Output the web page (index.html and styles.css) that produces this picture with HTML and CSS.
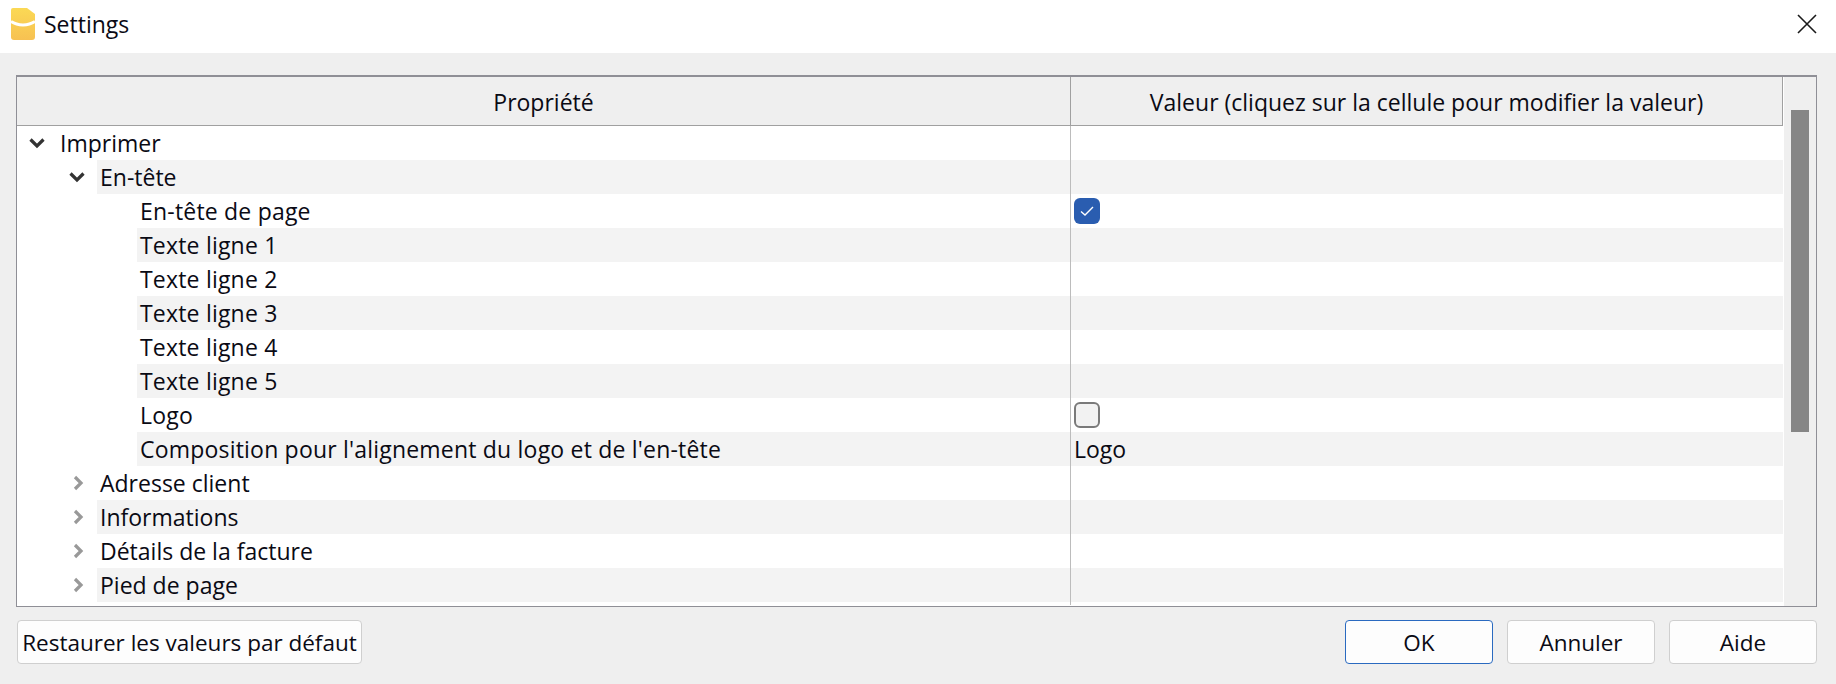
FILE: index.html
```html
<!DOCTYPE html>
<html lang="fr">
<head>
    <meta charset="UTF-8">
    <title>Settings</title>
    <link rel="stylesheet" href="styles.css">
</head>
<body>
    <div class="titlebar">
        <svg class="app-icon" width="26" height="34" viewBox="0 0 26 34">
            <defs>
                <linearGradient id="appGrad" x1="0" y1="0" x2="0" y2="1">
                    <stop offset="0" stop-color="#fbd955"/>
                    <stop offset="1" stop-color="#f7c152"/>
                </linearGradient>
            </defs>
            <path d="M3 1H17L25 7V30a3 3 0 0 1-3 3H4a3 3 0 0 1-3-3V3a2 2 0 0 1 2-2Z" fill="url(#appGrad)"/>
            <path d="M1 14.5C8 19 18 19 25 14.5" fill="none" stroke="#fff" stroke-width="3"/>
        </svg>
        <span class="title">Settings</span>
        <svg class="close" width="20" height="20" viewBox="0 0 20 20">
            <path d="M1 1L19 19M19 1L1 19" fill="none" stroke="#1a1a1a" stroke-width="1.6"/>
        </svg>
    </div>

    <div class="content">
        <div class="frame">
            <div class="grid">
                <div class="head">
                    <div class="head-cell">Propriété</div>
                    <div class="head-cell">Valeur (cliquez sur la cellule pour modifier la valeur)</div>
                </div>

                <div class="row">
                    <div class="name lvl1">
                        <svg class="twisty" viewBox="0 0 16 10"><path d="M1.5 1.5L8 8L14.5 1.5" class="open"/></svg>
                        <span class="label">Imprimer</span>
                    </div>
                    <div class="value"></div>
                </div>
                <div class="row alt">
                    <div class="name lvl2">
                        <svg class="twisty" viewBox="0 0 16 10"><path d="M1.5 1.5L8 8L14.5 1.5" class="open"/></svg>
                        <span class="label">En-tête</span>
                    </div>
                    <div class="value"></div>
                </div>
                <div class="row">
                    <div class="name lvl3"><span class="label">En-tête de page</span></div>
                    <div class="value">
                        <span class="check on">
                            <svg width="14" height="12" viewBox="0 0 14 12"><path d="M1 6.5L5 10L13 2" fill="none" stroke="#fff" stroke-width="1.4"/></svg>
                        </span>
                    </div>
                </div>
                <div class="row alt">
                    <div class="name lvl3"><span class="label">Texte ligne 1</span></div>
                    <div class="value"></div>
                </div>
                <div class="row">
                    <div class="name lvl3"><span class="label">Texte ligne 2</span></div>
                    <div class="value"></div>
                </div>
                <div class="row alt">
                    <div class="name lvl3"><span class="label">Texte ligne 3</span></div>
                    <div class="value"></div>
                </div>
                <div class="row">
                    <div class="name lvl3"><span class="label">Texte ligne 4</span></div>
                    <div class="value"></div>
                </div>
                <div class="row alt">
                    <div class="name lvl3"><span class="label">Texte ligne 5</span></div>
                    <div class="value"></div>
                </div>
                <div class="row">
                    <div class="name lvl3"><span class="label">Logo</span></div>
                    <div class="value"><span class="check"></span></div>
                </div>
                <div class="row alt">
                    <div class="name lvl3"><span class="label">Composition pour l'alignement du logo et de l'en-tête</span></div>
                    <div class="value">Logo</div>
                </div>
                <div class="row">
                    <div class="name lvl2">
                        <svg class="twisty" viewBox="0 0 16 16"><path d="M6 2L12 8L6 14" class="closed"/></svg>
                        <span class="label">Adresse client</span>
                    </div>
                    <div class="value"></div>
                </div>
                <div class="row alt">
                    <div class="name lvl2">
                        <svg class="twisty" viewBox="0 0 16 16"><path d="M6 2L12 8L6 14" class="closed"/></svg>
                        <span class="label">Informations</span>
                    </div>
                    <div class="value"></div>
                </div>
                <div class="row">
                    <div class="name lvl2">
                        <svg class="twisty" viewBox="0 0 16 16"><path d="M6 2L12 8L6 14" class="closed"/></svg>
                        <span class="label">Détails de la facture</span>
                    </div>
                    <div class="value"></div>
                </div>
                <div class="row alt">
                    <div class="name lvl2">
                        <svg class="twisty" viewBox="0 0 16 16"><path d="M6 2L12 8L6 14" class="closed"/></svg>
                        <span class="label">Pied de page</span>
                    </div>
                    <div class="value"></div>
                </div>
                <div class="row filler">
                    <div class="name"></div>
                    <div class="value"></div>
                </div>
            </div>
            <div class="scrollbar"><div class="thumb"></div></div>
        </div>

        <div class="buttons">
            <button class="btn wide">Restaurer les valeurs par défaut</button>
            <div class="right-buttons">
                <button class="btn primary">OK</button>
                <button class="btn">Annuler</button>
                <button class="btn">Aide</button>
            </div>
        </div>
    </div>
</body>
</html>
```

FILE: styles.css
```css
html, body {
    height: 100%;
}
body {
    margin: 0;
    display: flex;
    flex-direction: column;
    font-family: 'Open Sans', 'Noto Sans', sans-serif;
    font-size: 23px;
    color: #0a0a14;
    background-color: #efefef;
}
.titlebar {
    height: 53px;
    box-sizing: border-box;
    background-color: #fff;
    display: flex;
    align-items: center;
    padding: 0 19px 5px 10px;
}
.app-icon {
    margin-right: 8px;
}
.title {
    flex: 1;
}
.content {
    flex: 1;
    padding: 22px 19px 0 16px;
}
.frame {
    display: flex;
    height: 532px;
    border: 1px solid #8f8f96;
    border-top-width: 2px;
    background-color: #fff;
    box-sizing: border-box;
}
.grid {
    width: 1766px;
}
.head {
    display: grid;
    grid-template-columns: 1053px 1fr;
    height: 48px;
    border-bottom: 1px solid #a0a0a0;
    background-color: #efefef;
    border-right: 1px solid #a0a0a0;
}
.head-cell {
    display: flex;
    align-items: center;
    justify-content: center;
    padding-top: 2px;
}
.head-cell + .head-cell {
    border-left: 1px solid #a0a0a0;
}
.row {
    display: grid;
    grid-template-columns: 1053px 1fr;
    height: 34px;
}
.row.filler {
    height: 3px;
}
.name {
    display: flex;
    align-items: stretch;
}
.lvl1 { padding-left: 40px; }
.lvl2 { padding-left: 80px; }
.lvl3 { padding-left: 120px; letter-spacing: 0.2px; }
.twisty {
    width: 16px;
    height: 34px;
    margin-left: -28px;
    margin-right: 12px;
    flex-shrink: 0;
}
.twisty path {
    fill: none;
    stroke-width: 3.2;
}
.twisty .open {
    stroke: #333;
}
.twisty .closed {
    stroke: #999;
}
.label {
    flex: 1;
    padding-left: 3px;
    line-height: 34px;
    white-space: nowrap;
}
.value {
    border-left: 1px solid #bcbcbc;
    padding-left: 3px;
    line-height: 34px;
    display: flex;
    align-items: center;
}
.alt .label, .alt .value {
    background-color: #f3f3f3;
}
.check {
    width: 26px;
    height: 26px;
    border-radius: 6px;
    box-sizing: border-box;
    border: 2px solid #7a7a7a;
    background-color: #f2f2f2;
    display: flex;
    align-items: center;
    justify-content: center;
}
.check.on {
    border: none;
    background-color: #2a5db0;
}
.scrollbar {
    flex: 1;
    margin-left: 1px;
    background-color: #efefef;
    padding: 33px 7px 0;
}
.thumb {
    height: 322px;
    background-color: #868686;
}
.buttons {
    display: flex;
    justify-content: space-between;
    margin-top: 13px;
    padding-left: 1px;
}
.right-buttons {
    display: flex;
    gap: 14px;
}
.btn {
    height: 44px;
    width: 148px;
    padding: 0;
    font-family: inherit;
    font-size: 22.5px;
    color: inherit;
    background-color: #fdfdfd;
    border: 1px solid #cfcfcf;
    border-radius: 4px;
}
.btn.wide {
    width: 345px;
}
.btn.primary {
    border-color: #2a6ac0;
}
```
